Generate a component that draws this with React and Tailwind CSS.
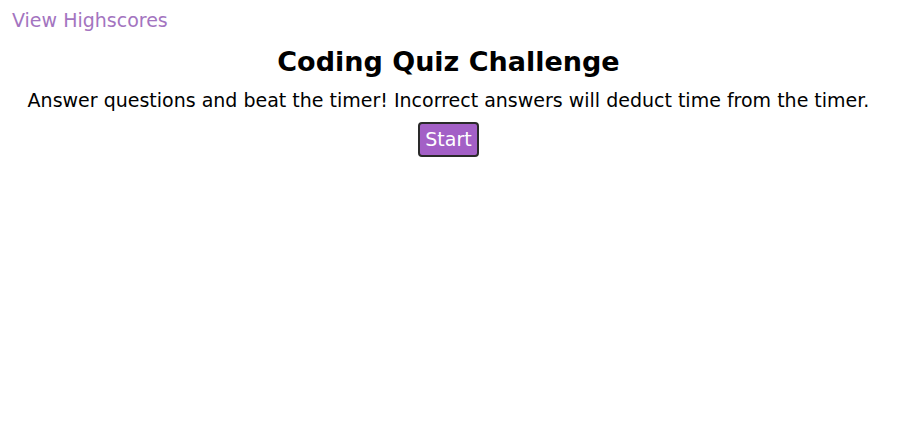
export default function App() {
  return (
    <div className="min-h-[439px] bg-white">
      <div className="font-['DejaVu_Sans',sans-serif]">
        <div className="px-[12px] pt-[7px]">
          <a className="text-[19px] leading-[26px] text-[#a374c0]">View Highscores</a>
        </div>
        <div className="flex flex-col items-center">
          <h1 className="mt-[11px] text-[27px] leading-[34px] font-bold text-black">Coding Quiz Challenge</h1>
          <p className="mt-[8px] text-[19px] leading-[26px] text-black">Answer questions and beat the timer! Incorrect answers will deduct time from the timer.</p>
          <button className="mt-[9px] rounded-[4px] border-2 border-[#2a2a2a] bg-[#a360c6] px-[5px] py-[3px] text-[19px] leading-[25px] text-white">Start</button>
        </div>
      </div>
    </div>
  );
}
